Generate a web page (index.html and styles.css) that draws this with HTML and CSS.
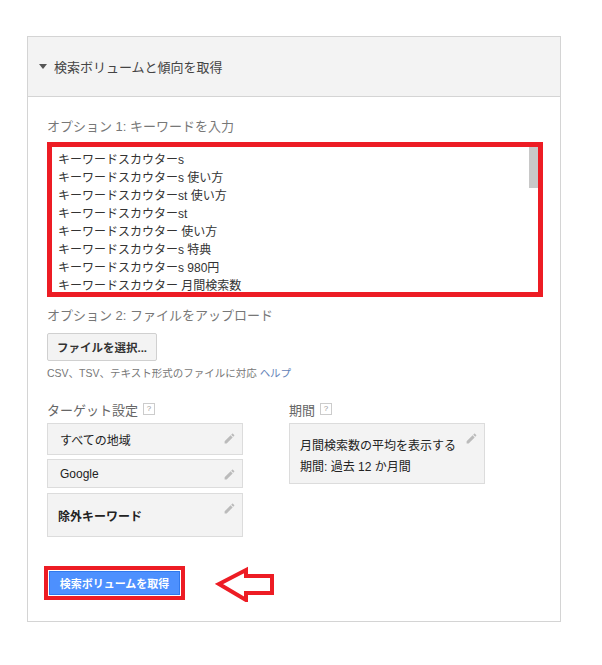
FILE: index.html
```html
<!DOCTYPE html>
<html lang="ja">
<head>
  <meta charset="UTF-8" />
  <meta name="viewport" content="width=device-width, initial-scale=1.0" />
  <title>検索ボリュームと傾向を取得</title>
  <link rel="stylesheet" href="styles.css">
</head>
<body>

  <div class="panel">
    <div class="panel-head">
      <span class="caret"></span>
      <span>検索ボリュームと傾向を取得</span>
    </div>

    <div class="panel-body">
      <div class="label">オプション 1: キーワードを入力</div>

      <!-- keyword box (red frame = annotation) -->
      <div class="keywords">
        <div class="kw-list">
          <div>キーワードスカウターs</div>
          <div>キーワードスカウターs 使い方</div>
          <div>キーワードスカウターst 使い方</div>
          <div>キーワードスカウターst</div>
          <div>キーワードスカウター 使い方</div>
          <div>キーワードスカウターs 特典</div>
          <div>キーワードスカウターs 980円</div>
          <div>キーワードスカウター 月間検索数</div>
        </div>
        <span class="scroll-thumb"></span>
      </div>

      <div class="label label-2">オプション 2: ファイルをアップロード</div>
      <button class="file-btn">ファイルを選択...</button>
      <div class="hint">CSV、TSV、テキスト形式のファイルに対応 <a href="#">ヘルプ</a></div>

      <div class="settings">
        <div class="col">
          <div class="col-title">ターゲット設定 <span class="qmark">?</span></div>
          <div class="box">すべての地域<svg class="pencil" viewBox="0 0 24 24"><path d="M3 17.25V21h3.75L17.81 9.94l-3.75-3.75L3 17.25zM20.71 7.04c.39-.39.39-1.02 0-1.41l-2.34-2.34c-.39-.39-1.02-.39-1.41 0l-1.83 1.83 3.75 3.75 1.83-1.83z"/></svg></div>
          <div class="box box-short">Google<svg class="pencil" viewBox="0 0 24 24"><path d="M3 17.25V21h3.75L17.81 9.94l-3.75-3.75L3 17.25zM20.71 7.04c.39-.39.39-1.02 0-1.41l-2.34-2.34c-.39-.39-1.02-.39-1.41 0l-1.83 1.83 3.75 3.75 1.83-1.83z"/></svg></div>
          <div class="box box-tall"><b>除外キーワード</b><svg class="pencil" viewBox="0 0 24 24"><path d="M3 17.25V21h3.75L17.81 9.94l-3.75-3.75L3 17.25zM20.71 7.04c.39-.39.39-1.02 0-1.41l-2.34-2.34c-.39-.39-1.02-.39-1.41 0l-1.83 1.83 3.75 3.75 1.83-1.83z"/></svg></div>
        </div>
        <div class="col">
          <div class="col-title">期間 <span class="qmark">?</span></div>
          <div class="box box-period">
            月間検索数の平均を表示する<br>期間: 過去 12 か月間
            <svg class="pencil" viewBox="0 0 24 24"><path d="M3 17.25V21h3.75L17.81 9.94l-3.75-3.75L3 17.25zM20.71 7.04c.39-.39.39-1.02 0-1.41l-2.34-2.34c-.39-.39-1.02-.39-1.41 0l-1.83 1.83 3.75 3.75 1.83-1.83z"/></svg>
          </div>
        </div>
      </div>

      <div class="actions">
        <div class="get-frame">
          <button class="get-btn">検索ボリュームを取得</button>
        </div>
        <svg class="arrow" viewBox="0 0 60 38" width="60" height="38">
          <polygon points="4,20 31,6 31,12 57,12 57,29 31,29 31,36" />
        </svg>
      </div>
    </div>
  </div>

</body>
</html>
```

FILE: styles.css
```css
body {
  margin: 0;
  background: #fff;
  font-family: Arial, "Liberation Sans", "Noto Sans CJK JP", sans-serif;
  color: #333;
}

.panel {
  margin: 36px 0 0 27px;
  width: 532px;
  border: 1px solid #d4d4d4;
  background: #fff;
}

.panel-head {
  display: flex;
  align-items: center;
  height: 59px;
  padding-left: 11px;
  background: #f3f3f3;
  border-bottom: 1px solid #d4d4d4;
  font-size: 13px;
  color: #444;
}

.caret {
  width: 0;
  height: 0;
  border-left: 4px solid transparent;
  border-right: 4px solid transparent;
  border-top: 5px solid #555;
  margin-right: 7px;
}

.panel-body {
  padding: 21px 20px 19px 19px;
}

.label {
  font-size: 13px;
  color: #777;
  line-height: 18px;
}

/* keyword textarea */
.keywords {
  position: relative;
  margin-top: 6px;
  width: 486px;
  height: 145px;
  overflow: hidden;
  border: 5px solid #ed1c24;
  background: #fff;
}

.kw-list {
  padding: 4px 6px 0;
  font-size: 12px;
  line-height: 18px;
  color: #333;
}

.scroll-thumb {
  position: absolute;
  top: 0;
  right: 0;
  width: 9px;
  height: 41px;
  background: #c8c8c8;
}

.label-2 {
  margin-top: 10px;
}

.file-btn {
  display: block;
  margin-top: 8px;
  width: 110px;
  height: 28px;
  padding: 0;
  border: 1px solid #d0d0d0;
  border-radius: 2px;
  background: #f3f3f3;
  font-family: inherit;
  font-size: 11.5px;
  font-weight: bold;
  color: #333;
}

.hint {
  margin-top: 5px;
  font-size: 10.5px;
  color: #777;
  line-height: 14px;
}

.hint a {
  color: #6483b8;
  text-decoration: none;
}

.settings {
  display: flex;
  gap: 46px;
  margin-top: 20px;
}

.col {
  width: 196px;
}

.col-title {
  display: flex;
  align-items: center;
  gap: 5px;
  font-size: 13px;
  color: #666;
  height: 18px;
  margin-bottom: 5px;
}

.qmark {
  display: inline-block;
  width: 10px;
  height: 10px;
  border: 1px solid #ccc;
  font-size: 8px;
  line-height: 10px;
  text-align: center;
  color: #999;
}

.box {
  position: relative;
  box-sizing: border-box;
  height: 32px;
  margin-bottom: 4px;
  padding: 0 0 0 12px;
  display: flex;
  align-items: center;
  background: #f3f3f3;
  border: 1px solid #dcdcdc;
  font-size: 12px;
  color: #222;
}

.box-short {
  height: 29px;
}

.box-tall {
  height: 44px;
  margin-top: 5px;
  padding-left: 10px;
}

.box-period {
  display: block;
  height: 61px;
  padding: 12px 0 0 10px;
  line-height: 21px;
}

.pencil {
  position: absolute;
  top: 8px;
  right: 6px;
  width: 13px;
  height: 13px;
  fill: #bbb;
}

.actions {
  display: flex;
  align-items: center;
  gap: 30px;
  margin-top: 23px;
  margin-left: -3px;
}

.get-frame {
  border: 4px solid #ed1c24;
  padding: 1px;
  background: #fff;
}

.get-btn {
  display: block;
  width: 131px;
  height: 24px;
  padding: 0;
  border: 1px solid #3079ed;
  background: #4d90fe;
  color: #fff;
  font-family: inherit;
  font-size: 11px;
  font-weight: bold;
}

.arrow polygon {
  fill: none;
  stroke: #ed1c24;
  stroke-width: 4;
  stroke-linejoin: miter;
}
```
